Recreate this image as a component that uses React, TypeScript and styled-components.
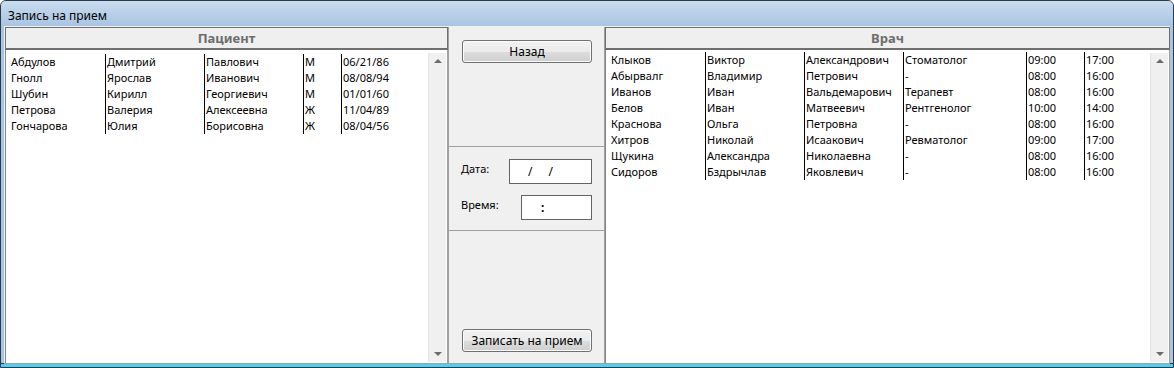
import React from "react";
import styled, { createGlobalStyle } from "styled-components";

const GlobalStyle = createGlobalStyle`
  html, body {
    margin: 0;
    padding: 0;
    background: #ffffff;
  }
  body {
    font-family: "Noto Sans", "Open Sans", sans-serif;
    font-size: 11px;
    color: #000;
  }
`;

const patients = [
  ["Абдулов", "Дмитрий", "Павлович", "М", "06/21/86"],
  ["Гнолл", "Ярослав", "Иванович", "М", "08/08/94"],
  ["Шубин", "Кирилл", "Георгиевич", "М", "01/01/60"],
  ["Петрова", "Валерия", "Алексеевна", "Ж", "11/04/89"],
  ["Гончарова", "Юлия", "Борисовна", "Ж", "08/04/56"],
];

const doctors = [
  ["Клыков", "Виктор", "Александрович", "Стоматолог", "09:00", "17:00"],
  ["Абырвалг", "Владимир", "Петрович", "-", "08:00", "16:00"],
  ["Иванов", "Иван", "Вальдемарович", "Терапевт", "08:00", "16:00"],
  ["Белов", "Иван", "Матвеевич", "Рентгенолог", "10:00", "14:00"],
  ["Краснова", "Ольга", "Петровна", "-", "08:00", "16:00"],
  ["Хитров", "Николай", "Исаакович", "Ревматолог", "09:00", "17:00"],
  ["Щукина", "Александра", "Николаевна", "-", "08:00", "16:00"],
  ["Сидоров", "Бздрычлав", "Яковлевич", "-", "08:00", "16:00"],
];

const patientCols = [95, 99, 99, 38, 80];
const doctorCols = [95, 99, 99, 123, 58, 56];

const Window = styled.div`
  width: 1174px;
  height: 368px;
  box-sizing: border-box;
  display: flex;
  flex-direction: column;
  border: 1px solid #2b3a4a;
  border-radius: 6px 6px 0 0;
  background: #bcd3ea;
  overflow: hidden;
`;

const TitleBar = styled.div`
  height: 25px;
  flex: none;
  box-sizing: border-box;
  display: flex;
  align-items: center;
  padding: 3px 0 0 7px;
  font-family: "Noto Sans", sans-serif;
  font-size: 12px;
  background: linear-gradient(#c9dbee, #a9c5e3);
`;

const Frame = styled.div`
  flex: 1;
  display: flex;
  flex-direction: column;
  padding: 0 3px;
  background: #a9c5e3;
  border-bottom: 3px solid #4fd0ef;
  box-shadow: inset 0 -1px 0 #2b3a4a;
`;

const Body = styled.div`
  flex: 1;
  display: flex;
  background: #f0f0f0;
  padding: 1px 1px 0 1px;
  border-bottom: 1px solid #a0a0a0;
`;

const Panel = styled.div<{ $width: number }>`
  width: ${(p) => p.$width}px;
  flex: none;
  display: flex;
  flex-direction: column;
`;

const PanelHeader = styled.div`
  height: 23px;
  flex: none;
  box-sizing: border-box;
  border: 1px solid #6f6f6f;
  border-bottom-width: 2px;
  background: #efefef;
  display: flex;
  align-items: center;
  justify-content: center;
  font-size: 13px;
  font-weight: bold;
  color: #6d6d6d;
`;

const ListBox = styled.div`
  flex: 1;
  display: flex;
  background: #fff;
  border-left: 1px solid #828790;
  border-right: 1px solid #a0a0a0;
`;

const Rows = styled.div<{ $top: number }>`
  flex: 1;
  padding: ${(p) => p.$top}px 0 0 4px;
`;

const Row = styled.div<{ $cols: number[] }>`
  display: grid;
  grid-template-columns: ${(p) => p.$cols.map((c) => `${c}px`).join(" ")};
  height: 16px;
  line-height: 16px;
`;

const Cell = styled.div<{ $first?: boolean }>`
  padding-left: 1px;
  border-left: ${(p) => (p.$first ? "none" : "1px solid #000")};
  white-space: nowrap;
  overflow: hidden;
`;

const ScrollBar = styled.div`
  width: 17px;
  flex: none;
  margin: 3px 1px 1px 0;
  background: #f0f0f0;
  border-left: 1px solid #e6e6e6;
  display: flex;
  flex-direction: column;
  justify-content: space-between;
  align-items: center;
`;

const Arrow = styled.div<{ $down?: boolean }>`
  width: 0;
  height: 0;
  margin: 6px 0;
  border-left: 4px solid transparent;
  border-right: 4px solid transparent;
  ${(p) =>
    p.$down
      ? "border-top: 4px solid #6b6b6b;"
      : "border-bottom: 4px solid #6b6b6b;"}
`;

const Middle = styled.div`
  width: 157px;
  flex: none;
  display: flex;
  flex-direction: column;
  border-left: 1px solid #a0a0a0;
  border-right: 1px solid #a0a0a0;
  box-sizing: border-box;
`;

const MidSection = styled.div<{ $height?: number }>`
  ${(p) => (p.$height ? `height: ${p.$height}px; flex: none;` : "flex: 1;")}
  display: flex;
  flex-direction: column;
  padding: 0 12px 0 13px;
  box-sizing: border-box;
  border-bottom: 1px solid #a0a0a0;
  &:last-child {
    border-bottom: none;
    justify-content: flex-end;
    padding-bottom: 11px;
  }
`;

const Button = styled.button`
  width: 130px;
  height: 23px;
  box-sizing: border-box;
  border: 1px solid #707070;
  border-radius: 3px;
  background: linear-gradient(#f2f2f2 0%, #ebebeb 50%, #dddddd 51%, #cfcfcf 100%);
  font-family: "Noto Sans", sans-serif;
  font-size: 12px;
  color: #000;
  padding: 0;
  box-shadow: inset 0 0 0 1px #fcfcfc;
`;

const TopButton = styled(Button)`
  margin-top: 13px;
`;

const Field = styled.div`
  display: flex;
  align-items: center;
  justify-content: space-between;
  margin-top: 12px;
  & + & {
    margin-top: 11px;
  }
`;

const Label = styled.span`
  font-size: 11px;
  margin: 0 0 6px -1px;
`;

const MaskBox = styled.div<{ $width: number }>`
  width: ${(p) => p.$width}px;
  height: 25px;
  box-sizing: border-box;
  border: 1px solid #646464;
  background: #fff;
  display: flex;
  align-items: center;
  font-size: 12px;
`;

const MaskChar = styled.span<{ $gap: number; $bold?: boolean }>`
  margin-left: ${(p) => p.$gap}px;
  font-weight: ${(p) => (p.$bold ? "bold" : "normal")};
`;

const App = () => {
  return (
    <>
      <GlobalStyle />
      <Window>
        <TitleBar>Запись на прием</TitleBar>
        <Frame>
          <Body>
            <Panel $width={443}>
              <PanelHeader>Пациент</PanelHeader>
              <ListBox>
                <Rows $top={4}>
                  {patients.map((r, i) => (
                    <Row key={i} $cols={patientCols}>
                      {r.map((c, j) => (
                        <Cell key={j} $first={j === 0}>
                          {c}
                        </Cell>
                      ))}
                    </Row>
                  ))}
                </Rows>
                <ScrollBar>
                  <Arrow />
                  <Arrow $down />
                </ScrollBar>
              </ListBox>
            </Panel>
            <Middle>
              <MidSection $height={120}>
                <TopButton>Назад</TopButton>
              </MidSection>
              <MidSection $height={84}>
                <Field>
                  <Label>Дата:</Label>
                  <MaskBox $width={83}>
                    <MaskChar $gap={18}>/</MaskChar>
                    <MaskChar $gap={16}>/</MaskChar>
                  </MaskBox>
                </Field>
                <Field>
                  <Label>Время:</Label>
                  <MaskBox $width={71}>
                    <MaskChar $gap={19} $bold>
                      :
                    </MaskChar>
                  </MaskBox>
                </Field>
              </MidSection>
              <MidSection>
                <Button>Записать на прием</Button>
              </MidSection>
            </Middle>
            <Panel $width={565}>
              <PanelHeader>Врач</PanelHeader>
              <ListBox>
                <Rows $top={2}>
                  {doctors.map((r, i) => (
                    <Row key={i} $cols={doctorCols}>
                      {r.map((c, j) => (
                        <Cell key={j} $first={j === 0}>
                          {c}
                        </Cell>
                      ))}
                    </Row>
                  ))}
                </Rows>
                <ScrollBar>
                  <Arrow />
                  <Arrow $down />
                </ScrollBar>
              </ListBox>
            </Panel>
          </Body>
        </Frame>
      </Window>
    </>
  );
};

export default App;
